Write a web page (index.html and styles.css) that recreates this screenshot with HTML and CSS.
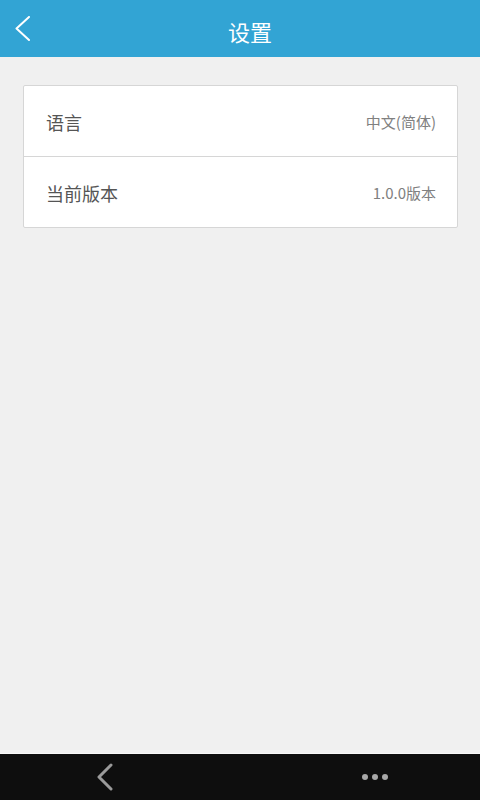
FILE: index.html
```html
<!DOCTYPE html>
<html lang="zh-CN">
<head>
    <meta charset="UTF-8">
    <meta name="viewport" content="width=device-width, initial-scale=1.0">
    <title>设置</title>
    <link rel="stylesheet" href="styles.css">
</head>
<body>
    <div class="app">
        <header class="title-bar">
            <button class="back-btn" aria-label="返回">
                <svg width="16" height="26" viewBox="0 0 16 26">
                    <polyline points="14,1 1.5,12.5 14,24" fill="none" stroke="#fff" stroke-width="2" stroke-linecap="round" stroke-linejoin="round"/>
                </svg>
            </button>
            <h1>设置</h1>
        </header>

        <main class="content">
            <div class="settings-card">
                <div class="setting-row">
                    <span class="setting-label">语言</span>
                    <span class="setting-value">中文(简体)</span>
                </div>
                <div class="setting-row">
                    <span class="setting-label">当前版本</span>
                    <span class="setting-value">1.0.0版本</span>
                </div>
            </div>
        </main>

        <nav class="nav-bar">
            <button class="nav-btn" aria-label="返回">
                <svg width="20" height="28" viewBox="0 0 20 28">
                    <polyline points="16,2 4,14 16,26" fill="none" stroke="#9a9a9a" stroke-width="3" stroke-linecap="round" stroke-linejoin="round"/>
                </svg>
            </button>
            <button class="nav-btn" aria-label="更多">
                <span class="dot"></span>
                <span class="dot"></span>
                <span class="dot"></span>
            </button>
        </nav>
    </div>
</body>
</html>
```

FILE: styles.css
```css
* {
    box-sizing: border-box;
    margin: 0;
    padding: 0;
}

body {
    font-family: "Noto Sans CJK SC", "Noto Sans", Roboto, sans-serif;
    background: #f0f0f0;
    color: #444;
}

button {
    background: none;
    border: none;
    cursor: pointer;
}

.app {
    display: flex;
    flex-direction: column;
    height: 800px;
}

.title-bar {
    height: 57px;
    background: #32a4d4;
    display: flex;
    align-items: center;
    justify-content: center;
    position: relative;
    flex-shrink: 0;
}

.title-bar h1 {
    color: #fff;
    font-size: 22px;
    font-weight: normal;
    padding: 5px 0 0 20px;
    line-height: 1;
}

.back-btn {
    position: absolute;
    left: 15px;
    top: 16px;
    display: flex;
}

.content {
    flex: 1;
    padding: 28px 22px 0 23px;
}

.settings-card {
    background: #fff;
    border: 1px solid #d6d6d6;
    border-radius: 2px;
}

.setting-row {
    height: 70px;
    display: flex;
    align-items: center;
    justify-content: space-between;
    padding: 0 21px 0 22px;
}

.setting-row + .setting-row {
    border-top: 1px solid #d6d6d6;
    height: 71px;
}

.setting-label {
    font-size: 18px;
    color: #555;
    padding-top: 2px;
}

.setting-value {
    font-size: 15px;
    color: #808080;
    padding-top: 1px;
}

.nav-bar {
    height: 47px;
    background: #0e0e0e;
    border-top: 1px solid #f8f8f8;
    display: flex;
    align-items: center;
    justify-content: space-between;
    padding: 0 80px;
    flex-shrink: 0;
}

.nav-btn {
    width: 50px;
    height: 46px;
    display: flex;
    align-items: center;
    justify-content: center;
    gap: 4px;
}

.dot {
    width: 6px;
    height: 6px;
    border-radius: 50%;
    background: #a8a8a8;
}
```
